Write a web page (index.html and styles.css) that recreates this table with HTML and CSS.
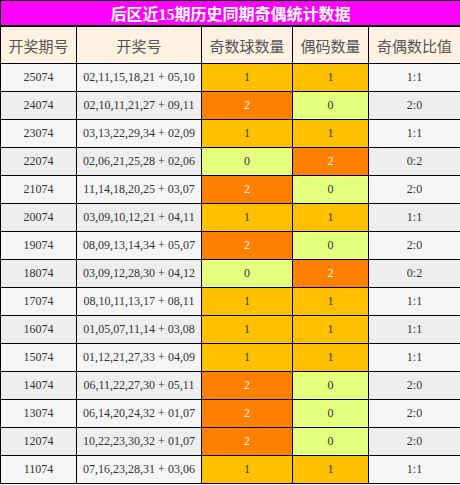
FILE: index.html
```html
<!DOCTYPE html>
<html lang="zh-CN">
<head>
    <meta charset="UTF-8">
    <meta name="viewport" content="width=device-width, initial-scale=1.0">
    <title>后区近15期历史同期奇偶统计数据</title>
    <link rel="stylesheet" href="styles.css">
</head>
<body>

<table class="stats">
    <colgroup>
        <col class="c-qh">
        <col class="c-hm">
        <col class="c-odd">
        <col class="c-even">
        <col class="c-ratio">
    </colgroup>
    <thead>
        <tr><th colspan="5" class="title">后区近15期历史同期奇偶统计数据</th></tr>
        <tr class="head">
            <th>开奖期号</th>
            <th>开奖号</th>
            <th>奇数球数量</th>
            <th>偶码数量</th>
            <th>奇偶数比值</th>
        </tr>
    </thead>
    <tbody>
        <tr><td>25074</td><td>02,11,15,18,21 + 05,10</td><td class="amber">1</td><td class="amber">1</td><td>1:1</td></tr>
        <tr><td>24074</td><td>02,10,11,21,27 + 09,11</td><td class="orange">2</td><td class="lime">0</td><td>2:0</td></tr>
        <tr><td>23074</td><td>03,13,22,29,34 + 02,09</td><td class="amber">1</td><td class="amber">1</td><td>1:1</td></tr>
        <tr><td>22074</td><td>02,06,21,25,28 + 02,06</td><td class="lime">0</td><td class="orange">2</td><td>0:2</td></tr>
        <tr><td>21074</td><td>11,14,18,20,25 + 03,07</td><td class="orange">2</td><td class="lime">0</td><td>2:0</td></tr>
        <tr><td>20074</td><td>03,09,10,12,21 + 04,11</td><td class="amber">1</td><td class="amber">1</td><td>1:1</td></tr>
        <tr><td>19074</td><td>08,09,13,14,34 + 05,07</td><td class="orange">2</td><td class="lime">0</td><td>2:0</td></tr>
        <tr><td>18074</td><td>03,09,12,28,30 + 04,12</td><td class="lime">0</td><td class="orange">2</td><td>0:2</td></tr>
        <tr><td>17074</td><td>08,10,11,13,17 + 08,11</td><td class="amber">1</td><td class="amber">1</td><td>1:1</td></tr>
        <tr><td>16074</td><td>01,05,07,11,14 + 03,08</td><td class="amber">1</td><td class="amber">1</td><td>1:1</td></tr>
        <tr><td>15074</td><td>01,12,21,27,33 + 04,09</td><td class="amber">1</td><td class="amber">1</td><td>1:1</td></tr>
        <tr><td>14074</td><td>06,11,22,27,30 + 05,11</td><td class="orange">2</td><td class="lime">0</td><td>2:0</td></tr>
        <tr><td>13074</td><td>06,14,20,24,32 + 01,07</td><td class="orange">2</td><td class="lime">0</td><td>2:0</td></tr>
        <tr><td>12074</td><td>10,22,23,30,32 + 01,07</td><td class="orange">2</td><td class="lime">0</td><td>2:0</td></tr>
        <tr><td>11074</td><td>07,16,23,28,31 + 03,06</td><td class="amber">1</td><td class="amber">1</td><td>1:1</td></tr>
    </tbody>
</table>

</body>
</html>
```

FILE: styles.css
```css
body {
    margin: 0;
    padding: 0;
    background-color: #fff;
    font-family: "Liberation Serif", "Noto Sans CJK SC", serif;
}

.stats {
    width: 460px;
    border-collapse: collapse;
    table-layout: fixed;
}

.c-qh { width: 76px; }
.c-hm { width: 125px; }
.c-odd { width: 91px; }
.c-even { width: 76px; }
.c-ratio { width: 92px; }

.stats th, .stats td {
    border: 1px solid #000;
    text-align: center;
    padding: 0;
}

.title {
    height: 24px;
    background-color: #ff00ff;
    color: #fff;
    font-size: 16px;
    font-weight: bold;
    border-bottom-width: 2px !important;
}

.head th {
    height: 36px;
    background-color: #fff2e3;
    color: #555;
    font-size: 15px;
    font-weight: normal;
    font-family: "Noto Sans CJK SC", sans-serif;
}

.stats td {
    height: 27px;
    font-size: 12px;
    color: #333;
    background-color: #f5f5f5;
}

.stats tbody tr:nth-child(even) td {
    background-color: #eeeeee;
}

.stats tbody tr td.amber {
    background-color: #ffc000;
}

.stats tbody tr td.orange {
    background-color: #ff8000;
    color: #fff;
}

.stats tbody tr td.lime {
    background-color: #e5ff7f;
}
```
